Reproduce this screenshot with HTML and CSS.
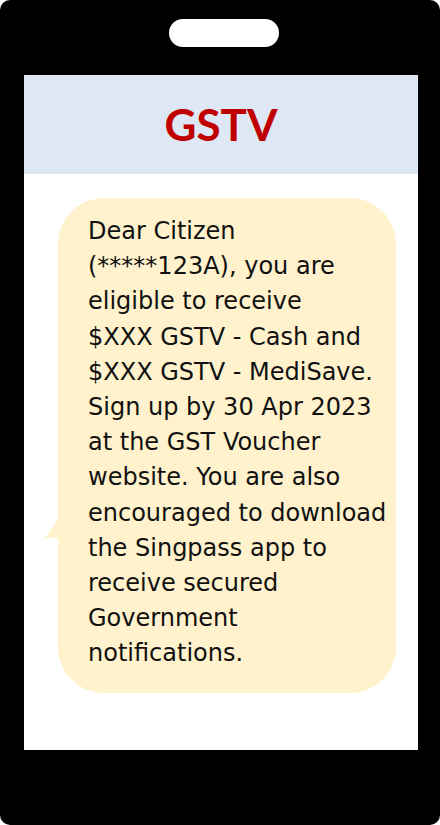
FILE: index.html
```html
<!DOCTYPE html>
<html lang="en">
<head>
<meta charset="utf-8">
<title>GSTV SMS</title>
<link rel="stylesheet" href="styles.css">
</head>
<body>
<div class="phone">
  <div class="speaker"></div>
  <div class="screen">
    <header class="header"><h1 class="title">GSTV</h1></header>
    <div class="chat">
      <div class="bubble">
        <p class="msg">Dear Citizen<br>(*****123A), you are<br>eligible to receive<br>$XXX GSTV - Cash and<br>$XXX GSTV - MediSave.<br>Sign up by 30 Apr 2023<br>at the GST Voucher<br>website. You are also<br>encouraged to download<br>the Singpass app to<br>receive secured<br>Government<br>notifications.</p>
      </div>
    </div>
  </div>
</div>
</body>
</html>
```

FILE: styles.css
```css
* { box-sizing: border-box; }
html, body { margin: 0; padding: 0; background: #ffffff; }
body { width: 440px; height: 825px; overflow: hidden; }

.phone {
  width: 440px;
  height: 825px;
  background: #000000;
  border-radius: 10px;
  padding: 19px 22px 0 24px;
  display: flex;
  flex-direction: column;
}

.speaker {
  width: 110px;
  height: 28px;
  margin-left: 145px;
  background: #ffffff;
  border-radius: 14px;
}

.screen {
  margin-top: 28px;
  width: 394px;
  height: 675px;
  background: #ffffff;
  display: flex;
  flex-direction: column;
}

.header {
  height: 99px;
  background: #dee8f4;
  display: flex;
  align-items: center;
  justify-content: center;
}

.title {
  margin: 0 0 2px 0;
  font-family: Lato, "Open Sans", sans-serif;
  font-weight: 700;
  font-size: 44px;
  line-height: 1;
  color: #c00000;
}

.chat {
  padding: 24px 0 0 34px;
}

.bubble {
  position: relative;
  width: 338px;
  height: 495px;
  background: #fff2cc;
  border-radius: 46px;
  padding: 16px 0 0 30px;
}

.bubble::before {
  content: "";
  position: absolute;
  left: -13px;
  top: 320px;
  width: 14px;
  height: 20px;
  background: #fff2cc;
  clip-path: polygon(100% 0, 0 100%, 100% 100%);
}

.msg {
  margin: 0;
  font-family: "DejaVu Sans", sans-serif;
  font-size: 24px;
  line-height: 35.2px;
  color: #111111;
  white-space: nowrap;
}
```
